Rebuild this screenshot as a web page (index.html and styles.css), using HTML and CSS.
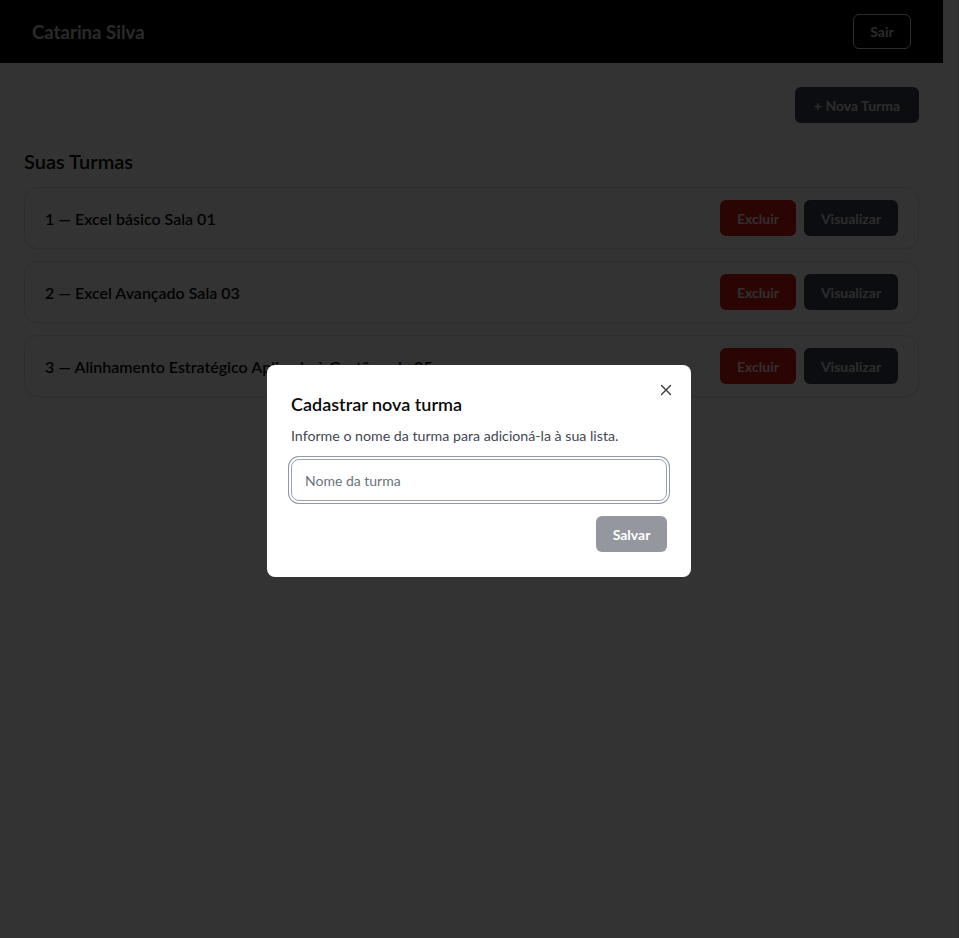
FILE: index.html
```html
<!DOCTYPE html>
<html lang="pt-BR">
<head>
<meta charset="utf-8">
<title>Turmas</title>
<link rel="stylesheet" href="styles.css">
</head>
<body>
<div class="page">
  <header class="topbar">
    <span class="user">Catarina Silva</span>
    <button class="btn-outline">Sair</button>
  </header>
  <main class="content">
    <div class="toolbar">
      <button class="btn btn-dark btn-new">+ Nova Turma</button>
    </div>
    <h2 class="section-title">Suas Turmas</h2>
    <ul class="class-list">
      <li class="class-card">
        <span class="class-name">1 — Excel básico Sala 01</span>
        <div class="actions">
          <button class="btn btn-danger">Excluir</button>
          <button class="btn btn-dark">Visualizar</button>
        </div>
      </li>
      <li class="class-card">
        <span class="class-name">2 — Excel Avançado Sala 03</span>
        <div class="actions">
          <button class="btn btn-danger">Excluir</button>
          <button class="btn btn-dark">Visualizar</button>
        </div>
      </li>
      <li class="class-card">
        <span class="class-name">3 — Alinhamento Estratégico Aplicado à Gestão sala 05</span>
        <div class="actions">
          <button class="btn btn-danger">Excluir</button>
          <button class="btn btn-dark">Visualizar</button>
        </div>
      </li>
    </ul>
  </main>
</div>

<div class="overlay"></div>

<div class="dialog" role="dialog" aria-modal="true">
  <button class="dialog-close" aria-label="Fechar">
    <svg width="12" height="12" viewBox="0 0 12 12"><path d="M1.5 1.5 L10.5 10.5 M10.5 1.5 L1.5 10.5" stroke="#3a3a3a" stroke-width="1.4" stroke-linecap="round" fill="none"/></svg>
  </button>
  <h3 class="dialog-title">Cadastrar nova turma</h3>
  <p class="dialog-desc">Informe o nome da turma para adicioná-la à sua lista.</p>
  <input class="dialog-input" type="text" placeholder="Nome da turma">
  <div class="dialog-footer">
    <button class="btn btn-save">Salvar</button>
  </div>
</div>
</body>
</html>
```

FILE: styles.css
```css
* { box-sizing: border-box; }

html, body {
  margin: 0;
  padding: 0;
  height: 100%;
  background: #ffffff;
}

body {
  font-family: Lato, "Liberation Sans", sans-serif;
  color: #111827;
  padding-right: 16px;
  box-shadow: inset -1px 0 0 #cfcfcf;
}

.page {
  min-height: 100%;
}

button {
  font-family: inherit;
  cursor: pointer;
}

.topbar {
  height: 63px;
  background: #000000;
  display: flex;
  align-items: center;
  justify-content: space-between;
  padding: 0 32px;
}

.user {
  color: #cfd2d6;
  font-size: 18.6px;
  font-weight: 700;
}

.btn-outline {
  height: 35px;
  width: 58px;
  background: transparent;
  border: 1px solid #dadde2;
  border-radius: 6px;
  color: #cfd2d6;
  font-size: 14px;
  font-weight: 700;
}

.content {
  padding: 24px;
}

.toolbar {
  display: flex;
  justify-content: flex-end;
}

.btn {
  height: 36px;
  border: none;
  border-radius: 6px;
  font-size: 14px;
  font-weight: 700;
  padding: 0 16px;
}

.btn-dark {
  background: #3b4254;
  color: #dadada;
}

.btn-new {
  width: 124px;
}

.btn-danger {
  background: #d41818;
  color: #f3e6e6;
  width: 76px;
}

.actions .btn-dark {
  width: 94px;
}

.section-title {
  margin: 24px 0 12px;
  font-size: 20px;
  line-height: 28px;
  font-weight: 600;
  color: #0a0a0a;
}

.class-list {
  list-style: none;
  margin: 0;
  padding: 0;
  display: flex;
  flex-direction: column;
  gap: 12px;
}

.class-card {
  display: flex;
  align-items: center;
  justify-content: space-between;
  padding: 12px 20px;
  border: 1px solid #e2e2e2;
  border-radius: 14px;
  background: #ffffff;
  box-shadow: 0 1px 2px rgba(0, 0, 0, 0.06);
}

.class-name {
  font-size: 16px;
  font-weight: 600;
  color: #0a0a0a;
}

.actions {
  display: flex;
  gap: 8px;
}

.overlay {
  position: fixed;
  inset: 0;
  background: rgba(0, 0, 0, 0.8);
}

.dialog {
  position: fixed;
  left: calc(50% - 212.5px);
  top: calc(50% - 104px);
  width: 424px;
  background: #ffffff;
  border-radius: 8px;
  padding: 25px 24px 25px;
  display: flex;
  flex-direction: column;
}

.dialog-close {
  position: absolute;
  top: 19px;
  right: 19px;
  width: 12px;
  height: 12px;
  padding: 0;
  border: none;
  background: transparent;
  display: flex;
}

.dialog-title {
  margin: 0;
  font-size: 18px;
  line-height: 28px;
  font-weight: 600;
  color: #0a0a0a;
}

.dialog-desc {
  margin: 8px 0 0;
  font-size: 14.2px;
  line-height: 20px;
  color: #3f4754;
}

.dialog-input {
  margin-top: 13px;
  height: 42px;
  width: 100%;
  border: 1px solid #9aa3b2;
  border-radius: 8px;
  padding: 0 13px;
  font-family: inherit;
  font-size: 14px;
  color: #111827;
  outline: none;
  box-shadow: 0 0 0 2px #ffffff, 0 0 0 3px #8f98a8;
}

.dialog-input::placeholder {
  color: #6b7280;
}

.dialog-footer {
  margin-top: 15px;
  display: flex;
  justify-content: flex-end;
}

.btn-save {
  width: 71px;
  height: 36px;
  background: #94979e;
  color: #ffffff;
  border-radius: 6px;
}
```
